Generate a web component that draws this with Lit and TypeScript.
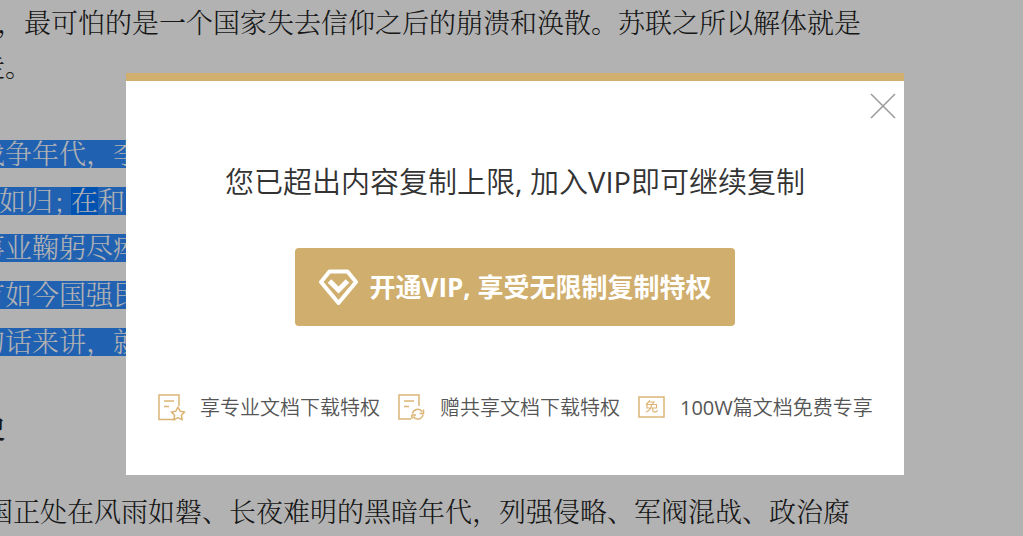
import { LitElement, html, css, svg } from "lit";
import { customElement } from "lit/decorators.js";

const star = svg`<path d="M17.500 25.500H1V1h20v11" /><path d="M6 7h10M6 12.500h5" />
  <path stroke-linejoin="round" d="M20 13l2.100 4.200 4.600.7-3.300 3.300.8 4.600-4.200-2.200-4.200 2.200.8-4.600-3.300-3.300 4.600-.7z" />`;
const cycle = svg`<path d="M13 25H1V1h20v11" /><path d="M6 7h10M6 12.500h5" />
  <path d="M14.500 19.500a5.200 5.200 0 0 1 9.600-1.500M25 20.500a5.200 5.200 0 0 1-9.600 2" />
  <path d="M25.500 15.500v4h-4M14 25v-4h4" />`;
const free = svg`<rect x="1" y="3" width="25" height="20" />
  <path stroke-width="1.200" d="M12 6.500L8 10.500M11.500 8h4.500l-2 2.500M9 10.500h9.500v3.500H9zM13.500 10.500c0 4-1.500 6-5.500 7.500M14.800 14v2.500q0 1.300 1.300 1.300h2q1.200 0 1.200-1.800" />`;

@customElement("app-root")
export class AppRoot extends LitElement {
  static styles = css`
    :host {
      display: block;
      position: relative;
      min-height: 100vh;
      overflow: hidden;
      background: #fff;
      font-family: "Open Sans", "Noto Sans CJK SC", sans-serif;
    }
    * { box-sizing: border-box; }
    .doc {
      height: 100vh;
      overflow: hidden;
      color: #222;
      font: 300 27px/44px "Noto Serif CJK SC Light", "Noto Serif CJK SC", "Noto Sans CJK SC Light", "Noto Sans CJK SC", serif;
      white-space: nowrap;
    }
    .doc p, .doc h2 { margin: 0 0 0 -22px; }
    .doc .first { margin-left: -3px; }
    .doc .near { margin-left: -1px; }
    .doc .last { margin: 40px 0 0 -14px; }
    .doc h2 { margin-top: 40px; font-size: 27px; font-weight: 700; }
    .selected { padding-top: 42px; }
    .selected p { display: flex; align-items: center; height: 47px; }
    .mark { display: flex; height: 28px; line-height: 26px; background: #308cff; color: #fff; }
    .current { background: #0076ff; }
    .semi { width: 18px; padding-left: 2px; }
    .overlay {
      position: absolute;
      inset: 0;
      display: flex;
      justify-content: center;
      align-items: flex-start;
      padding: 73px 0 0 7px;
      background: rgba(0, 0, 0, 0.3);
    }
    .dialog {
      position: relative;
      width: 778px;
      max-width: 100%;
      padding: 76px 32px 50px;
      background: #fff;
      border-top: 8px solid #d0ae6d;
      text-align: center;
    }
    .close {
      position: absolute;
      top: 10px;
      right: 6px;
      width: 30px;
      height: 30px;
      padding: 0;
      border: 0;
      background: none;
      cursor: pointer;
    }
    .close svg { display: block; }
    h1 {
      margin: 0;
      color: #333;
      font: 400 29px/50px "Open Sans", "Noto Sans CJK SC DemiLight", "Noto Sans CJK SC", sans-serif;
    }
    .join {
      display: inline-flex;
      align-items: center;
      justify-content: center;
      gap: 12px;
      width: 440px;
      max-width: 100%;
      height: 78px;
      margin-top: 41px;
      padding: 0;
      border: 0;
      border-radius: 4px;
      background: #d0ae6d;
      color: #fff;
      font: 700 26px/40px "Open Sans", "Noto Sans CJK SC", sans-serif;
      cursor: pointer;
    }
    ul {
      display: grid;
      grid-template-columns: repeat(3, 240px);
      margin: 65px 0 0;
      padding: 0;
      list-style: none;
    }
    li {
      display: flex;
      align-items: center;
      gap: 14px;
      color: #555;
      font: 400 20px/34px "Open Sans", "Noto Sans CJK SC DemiLight", "Noto Sans CJK SC", sans-serif;
      white-space: nowrap;
    }
    li svg { flex: none; fill: none; stroke: #dcb576; stroke-width: 1.5; }
  `;

  private benefits = [
    { icon: star, text: "享专业文档下载特权" },
    { icon: cycle, text: "赠共享文档下载特权" },
    { icon: free, text: "100W篇文档免费专享" },
  ];

  render() {
    return html`
      <main class="doc" lang="zh-CN">
        <p class="first">，最可怕的是一个国家失去信仰之后的崩溃和涣散。苏联之所以解体就是</p>
        <p>走。</p>
        <section class="selected">
          <p><span class="mark">战争年代，李大钊</span></p>
          <p class="near"><span class="mark"><span>如归</span><span class="semi">;</span><span class="current">在</span><span>和平年</span></span></p>
          <p><span class="mark">事业鞠躬尽瘁，</span></p>
          <p><span class="mark">有如今国强民富</span></p>
          <p><span class="mark">句话来讲，就是</span></p>
        </section>
        <h2>史</h2>
        <p class="last">国正处在风雨如磐、长夜难明的黑暗年代，列强侵略、军阀混战、政治腐</p>
      </main>
      <div class="overlay">
        <section class="dialog" role="dialog" aria-modal="true" aria-labelledby="title" lang="zh-CN">
          <button class="close" aria-label="关闭">
            <svg width="30" height="30" viewBox="0 0 30 30" fill="none" stroke="#999" stroke-width="1.500">
              <path d="M3 3l24 24M27 3L3 27" />
            </svg>
          </button>
          <h1 id="title">您已超出内容复制上限, 加入VIP即可继续复制</h1>
          <button class="join">
            <svg width="39" height="37" viewBox="0 0 39 37" fill="none" stroke="#fff" stroke-linejoin="round">
              <path stroke-width="4" d="M10.500 2.500h18L37 13 19.500 34 2 13z" />
              <path stroke-width="5" stroke-linejoin="miter" d="M10.500 12l9 9 9-9" />
            </svg>
            <span>开通VIP, 享受无限制复制特权</span>
          </button>
          <ul>
            ${this.benefits.map(
              (b) => html`<li>
                <svg width="28" height="28" viewBox="0 0 28 28" aria-hidden="true">${b.icon}</svg>
                <span>${b.text}</span>
              </li>`
            )}
          </ul>
        </section>
      </div>
    `;
  }
}
